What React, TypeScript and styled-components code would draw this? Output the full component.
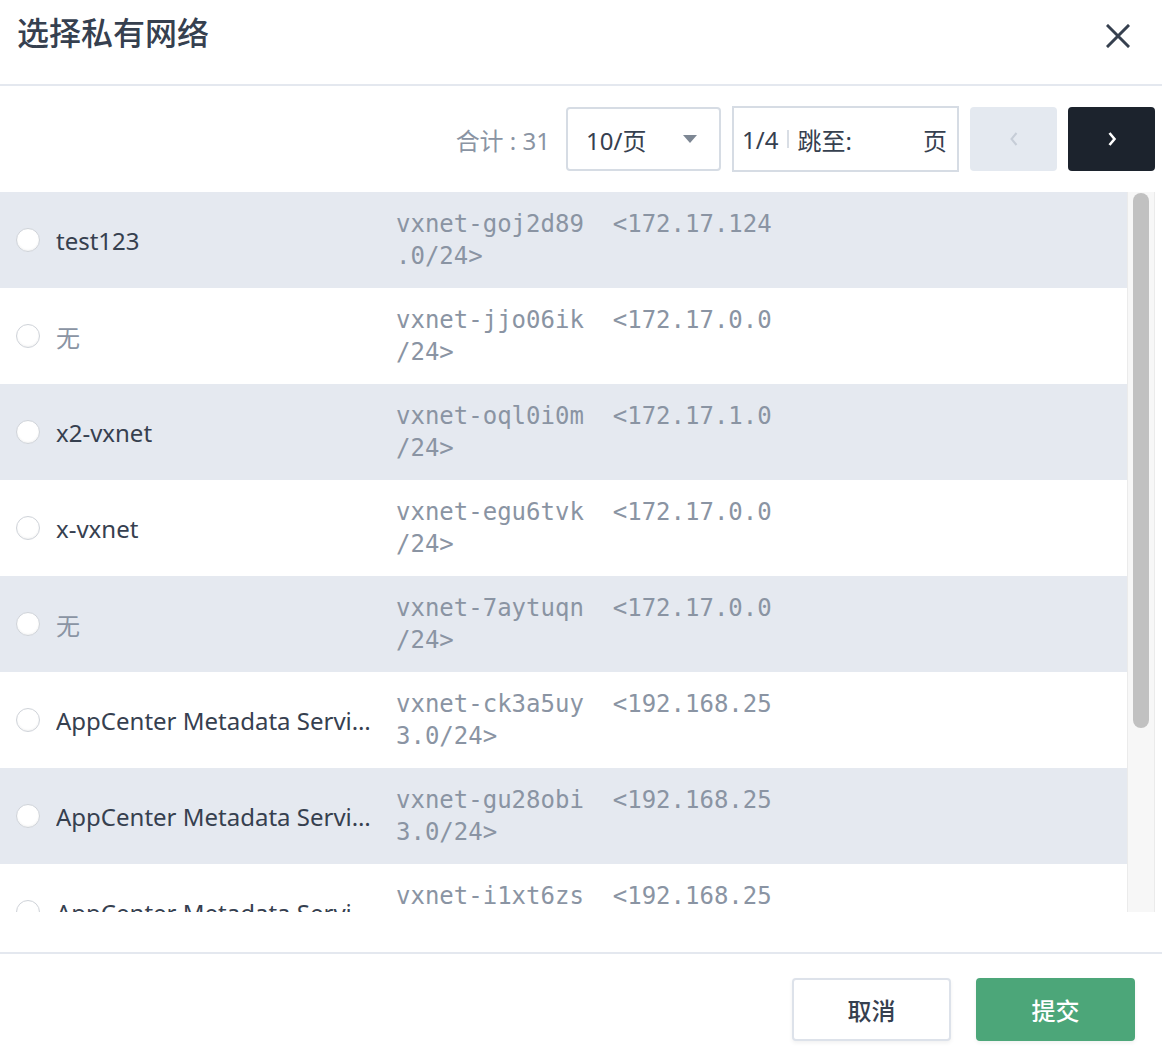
import styled, { createGlobalStyle } from 'styled-components';

const GlobalStyle = createGlobalStyle`
  * {
    box-sizing: border-box;
  }
  body {
    margin: 0;
    background: #ffffff;
    font-family: 'Noto Sans', 'Noto Sans CJK SC', sans-serif;
  }
`;

const colors = {
  text: '#36404f',
  muted: '#8a94a3',
  line: '#e4e8ef',
  field: '#d6dce4',
  stripe: '#e5e9f0',
  dark: '#1c232d',
  green: '#4ca679',
};

interface Network {
  name: string;
  id: string;
  cidr: string;
}

const networks: Network[] = [
  { name: 'test123', id: 'vxnet-goj2d89', cidr: '172.17.124.0/24' },
  { name: '无', id: 'vxnet-jjo06ik', cidr: '172.17.0.0/24' },
  { name: 'x2-vxnet', id: 'vxnet-oql0i0m', cidr: '172.17.1.0/24' },
  { name: 'x-vxnet', id: 'vxnet-egu6tvk', cidr: '172.17.0.0/24' },
  { name: '无', id: 'vxnet-7aytuqn', cidr: '172.17.0.0/24' },
  { name: 'AppCenter Metadata Service Network', id: 'vxnet-ck3a5uy', cidr: '192.168.253.0/24' },
  { name: 'AppCenter Metadata Service Network', id: 'vxnet-gu28obi', cidr: '192.168.253.0/24' },
  { name: 'AppCenter Metadata Service Network', id: 'vxnet-i1xt6zs', cidr: '192.168.253.0/24' },
  { name: 'AppCenter Metadata Service Network', id: 'vxnet-m2c8rwe', cidr: '192.168.253.0/24' },
  { name: 'default-vxnet', id: 'vxnet-0', cidr: '172.16.0.0/24' },
];

const ROW_HEIGHT = 96;
const VIEW_HEIGHT = 720;

const App = () => {
  const thumbHeight = (VIEW_HEIGHT * VIEW_HEIGHT) / (networks.length * ROW_HEIGHT);
  return (
    <>
      <GlobalStyle />
      <Dialog>
        <Header>
          <Title>选择私有网络</Title>
          <CloseButton aria-label='close'>
            <svg width='24' height='24' viewBox='0 0 24 24'>
              <path d='M2 2 L22 22 M22 2 L2 22' stroke={colors.text} strokeWidth='3' strokeLinecap='square' />
            </svg>
          </CloseButton>
        </Header>
        <Toolbar>
          <Total>合计 : 31</Total>
          <PageSize>
            <span>10/页</span>
            <Caret />
          </PageSize>
          <Jumper>
            <span>1/4</span>
            <Divider />
            <span>跳至:</span>
            <JumpInput />
            <span>页</span>
          </Jumper>
          <PageButton disabled>
            <svg width='10' height='16' viewBox='0 0 10 16'>
              <path d='M7.5 2 L2.5 8 L7.5 14' fill='none' stroke='#c6cdd7' strokeWidth='2' />
            </svg>
          </PageButton>
          <PageButton $dark>
            <svg width='10' height='16' viewBox='0 0 10 16'>
              <path d='M2.5 2 L7.5 8 L2.5 14' fill='none' stroke='#ffffff' strokeWidth='2.6' />
            </svg>
          </PageButton>
        </Toolbar>
        <ListArea>
          <List>
            {networks.map((n, i) => (
              <Row key={n.id} $striped={i % 2 === 0}>
                <Radio />
                <Name $muted={n.name === '无'}>{n.name}</Name>
                <Address>{`${n.id}  <${n.cidr}>`}</Address>
              </Row>
            ))}
          </List>
          <ScrollTrack>
            <ScrollThumb style={{ height: thumbHeight - 5 }} />
          </ScrollTrack>
        </ListArea>
        <Spacer />
        <Footer>
          <Button>取消</Button>
          <Button $primary>提交</Button>
        </Footer>
      </Dialog>
    </>
  );
};

const Dialog = styled.div`
  display: flex;
  flex-direction: column;
  width: 1162px;
  height: 1058px;
  background: #ffffff;
  overflow: hidden;
`;

const Header = styled.div`
  display: flex;
  justify-content: space-between;
  align-items: flex-start;
  height: 86px;
  padding: 9px 24px 0 17px;
  border-bottom: 2px solid ${colors.line};
`;

const Title = styled.h1`
  margin: 0;
  color: ${colors.text};
  font-size: 32px;
  font-weight: 500;
  line-height: 44px;
  font-family: 'Noto Sans CJK SC', sans-serif;
`;

const CloseButton = styled.button`
  display: flex;
  align-items: center;
  justify-content: center;
  width: 40px;
  height: 40px;
  margin-top: 7px;
  padding: 0;
  border: 0;
  background: none;
`;

const Toolbar = styled.div`
  display: flex;
  justify-content: flex-end;
  align-items: center;
  gap: 11px;
  height: 106px;
  padding-right: 7px;
  font-size: 24px;
  color: ${colors.text};
`;

const Total = styled.span`
  margin-right: 5px;
  color: ${colors.muted};
`;

const PageSize = styled.div`
  display: flex;
  justify-content: space-between;
  align-items: center;
  width: 155px;
  height: 64px;
  padding: 0 22px 0 18px;
  border: 2px solid ${colors.field};
  border-radius: 4px;
`;

const Caret = styled.span`
  width: 0;
  height: 0;
  border-left: 7px solid transparent;
  border-right: 7px solid transparent;
  border-top: 8px solid #7d8794;
`;

const Jumper = styled.div`
  display: flex;
  align-items: center;
  width: 227px;
  height: 66px;
  padding: 0 10px 0 8px;
  border: 2px solid ${colors.field};
`;

const Divider = styled.span`
  width: 2px;
  height: 18px;
  margin: 0 8px 0 9px;
  background: #d9dee5;
`;

const JumpInput = styled.span`
  flex: 1;
`;

const PageButton = styled.button<{ $dark?: boolean }>`
  display: flex;
  align-items: center;
  justify-content: center;
  width: 87px;
  height: 64px;
  padding: 0;
  border: 0;
  border-radius: 4px;
  background: ${(p) => (p.$dark ? colors.dark : '#e4e9f0')};
`;

const ListArea = styled.div`
  display: flex;
  height: ${VIEW_HEIGHT}px;
  margin-right: 7px;
  flex-shrink: 0;
`;

const List = styled.div`
  flex: 1;
  overflow: hidden;
`;

const Row = styled.div<{ $striped: boolean }>`
  display: flex;
  align-items: center;
  gap: 16px;
  height: ${ROW_HEIGHT}px;
  padding-left: 16px;
  background: ${(p) => (p.$striped ? colors.stripe : '#ffffff')};
`;

const Radio = styled.span`
  flex-shrink: 0;
  width: 24px;
  height: 24px;
  border: 1px solid #cfd3d9;
  border-radius: 50%;
  background: #ffffff;
  box-shadow: inset 0 -1px 2px rgba(0, 0, 0, 0.06);
`;

const Name = styled.span<{ $muted: boolean }>`
  flex-shrink: 0;
  width: 324px;
  overflow: hidden;
  color: ${(p) => (p.$muted ? colors.muted : colors.text)};
  font-size: 24px;
  white-space: nowrap;
  text-overflow: ellipsis;
`;

const Address = styled.span`
  flex-shrink: 0;
  width: 380px;
  color: ${colors.muted};
  font-family: 'DejaVu Sans Mono', monospace;
  font-size: 24px;
  line-height: 32px;
  white-space: pre-wrap;
  word-break: break-all;
  line-break: anywhere;
`;

const ScrollTrack = styled.div`
  width: 28px;
  padding: 1px 5px 0 5px;
  background: #f7f7f7;
  border-left: 1px solid #ebebeb;
  border-right: 1px solid #ebebeb;
`;

const ScrollThumb = styled.div`
  width: 16px;
  border-radius: 8px;
  background: #c1c1c1;
`;

const Spacer = styled.div`
  height: 40px;
  flex-shrink: 0;
`;

const Footer = styled.div`
  display: flex;
  justify-content: flex-end;
  gap: 25px;
  flex: 1;
  padding: 24px 27px 0 0;
  border-top: 2px solid ${colors.line};
`;

const Button = styled.button<{ $primary?: boolean }>`
  width: 159px;
  height: 63px;
  border: 2px solid ${(p) => (p.$primary ? colors.green : '#dde2ea')};
  border-radius: 4px;
  background: ${(p) => (p.$primary ? colors.green : '#ffffff')};
  box-shadow: 0 2px 4px rgba(0, 0, 0, 0.06);
  color: ${(p) => (p.$primary ? '#ffffff' : colors.text)};
  font-family: 'Noto Sans CJK SC', sans-serif;
  font-size: 24px;
  font-weight: 500;
`;

export default App;
